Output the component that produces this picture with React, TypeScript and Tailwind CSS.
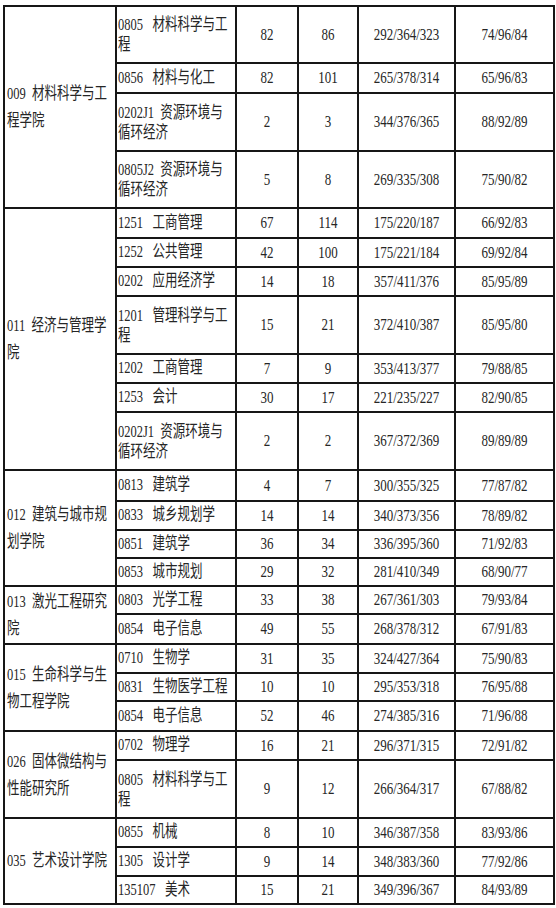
import React from 'react';

type Row = {
  major: string[];
  h: string;
  plan: string;
  admit: string;
  total: string;
  single: string;
};

type College = {
  name: string[];
  rows: Row[];
};

const spanClass: Record<number, string> = {
  2: 'row-span-2',
  3: 'row-span-3',
  4: 'row-span-4',
  7: 'row-span-7',
};

const colleges: College[] = [
  {
    name: ['009  材料科学与工', '程学院'],
    rows: [
      { major: ['0805   材料科学与工', '程'], h: 'h-[55px]', plan: '82', admit: '86', total: '292/364/323', single: '74/96/84' },
      { major: ['0856   材料与化工'], h: 'h-[28px]', plan: '82', admit: '101', total: '265/378/314', single: '65/96/83' },
      { major: ['0202J1  资源环境与', '循环经济'], h: 'h-[56px]', plan: '2', admit: '3', total: '344/376/365', single: '88/92/89' },
      { major: ['0805J2  资源环境与', '循环经济'], h: 'h-[55px]', plan: '5', admit: '8', total: '269/335/308', single: '75/90/82' },
    ],
  },
  {
    name: ['011  经济与管理学', '院'],
    rows: [
      { major: ['1251   工商管理'], h: 'h-[28px]', plan: '67', admit: '114', total: '175/220/187', single: '66/92/83' },
      { major: ['1252   公共管理'], h: 'h-[27px]', plan: '42', admit: '100', total: '175/221/184', single: '69/92/84' },
      { major: ['0202   应用经济学'], h: 'h-[27px]', plan: '14', admit: '18', total: '357/411/376', single: '85/95/89' },
      { major: ['1201   管理科学与工', '程'], h: 'h-[56px]', plan: '15', admit: '21', total: '372/410/387', single: '85/95/80' },
      { major: ['1202   工商管理'], h: 'h-[27px]', plan: '7', admit: '9', total: '353/413/377', single: '79/88/85' },
      { major: ['1253   会计'], h: 'h-[27px]', plan: '30', admit: '17', total: '221/235/227', single: '82/90/85' },
      { major: ['0202J1  资源环境与', '循环经济'], h: 'h-[56px]', plan: '2', admit: '2', total: '367/372/369', single: '89/89/89' },
    ],
  },
  {
    name: ['012  建筑与城市规', '划学院'],
    rows: [
      { major: ['0813   建筑学'], h: 'h-[29px]', plan: '4', admit: '7', total: '300/355/325', single: '77/87/82' },
      { major: ['0833   城乡规划学'], h: 'h-[27px]', plan: '14', admit: '14', total: '340/373/356', single: '78/89/82' },
      { major: ['0851   建筑学'], h: 'h-[26px]', plan: '36', admit: '34', total: '336/395/360', single: '71/92/83' },
      { major: ['0853   城市规划'], h: 'h-[26px]', plan: '29', admit: '32', total: '281/410/349', single: '68/90/77' },
    ],
  },
  {
    name: ['013  激光工程研究', '院'],
    rows: [
      { major: ['0803   光学工程'], h: 'h-[26px]', plan: '33', admit: '38', total: '267/361/303', single: '79/93/84' },
      { major: ['0854   电子信息'], h: 'h-[28px]', plan: '49', admit: '55', total: '268/378/312', single: '67/91/83' },
    ],
  },
  {
    name: ['015  生命科学与生', '物工程学院'],
    rows: [
      { major: ['0710   生物学'], h: 'h-[27px]', plan: '31', admit: '35', total: '324/427/364', single: '75/90/83' },
      { major: ['0831   生物医学工程'], h: 'h-[26px]', plan: '10', admit: '10', total: '295/353/318', single: '76/95/88' },
      { major: ['0854   电子信息'], h: 'h-[28px]', plan: '52', admit: '46', total: '274/385/316', single: '71/96/88' },
    ],
  },
  {
    name: ['026  固体微结构与', '性能研究所'],
    rows: [
      { major: ['0702   物理学'], h: 'h-[27px]', plan: '16', admit: '21', total: '296/371/315', single: '72/91/82' },
      { major: ['0805   材料科学与工', '程'], h: 'h-[56px]', plan: '9', admit: '12', total: '266/364/317', single: '67/88/82' },
    ],
  },
  {
    name: ['035  艺术设计学院'],
    rows: [
      { major: ['0855   机械'], h: 'h-[27px]', plan: '8', admit: '10', total: '346/387/358', single: '83/93/86' },
      { major: ['1305   设计学'], h: 'h-[27px]', plan: '9', admit: '14', total: '348/383/360', single: '77/92/86' },
      { major: ['135107   美术'], h: 'h-[26px]', plan: '15', admit: '21', total: '349/396/367', single: '84/93/89' },
    ],
  },
];

const Num = ({ value, h }: { value: string; h?: string }) => (
  <div className={`${h ?? ''} flex items-center justify-center bg-white`}>
    <span className="inline-block scale-y-[1.35] text-[13px] leading-[14px]">{value}</span>
  </div>
);

export default function App() {
  return (
    <div
      className="min-h-[908px] w-[556px] bg-white pl-[3px] pt-[5px] text-[#262626]"
      style={{ fontFamily: '"Liberation Serif", "Noto Sans CJK SC", serif' }}
    >
      <div className="inline-grid grid-cols-[110px_118px_60px_58px_95px_97px] gap-[2px] bg-[#161616] p-[2px]">
        {colleges.map((c) => (
          <React.Fragment key={c.name[0]}>
            <div className={`${spanClass[c.rows.length]} flex items-center bg-white pl-[2px]`}>
              <div className="scale-y-[1.35] whitespace-pre text-[12.5px] leading-[20px]">
                {c.name.map((l) => (
                  <div key={l}>{l}</div>
                ))}
              </div>
            </div>
            {c.rows.map((r, i) => (
              <React.Fragment key={i}>
                <div className={`${r.h} flex items-center bg-white pl-[1px]`}>
                  <div className="scale-y-[1.35] whitespace-pre text-[12.5px] leading-[14.5px]">
                    {r.major.map((l) => (
                      <div key={l}>{l}</div>
                    ))}
                  </div>
                </div>
                <Num value={r.plan} />
                <Num value={r.admit} />
                <Num value={r.total} />
                <Num value={r.single} />
              </React.Fragment>
            ))}
          </React.Fragment>
        ))}
      </div>
    </div>
  );
}
